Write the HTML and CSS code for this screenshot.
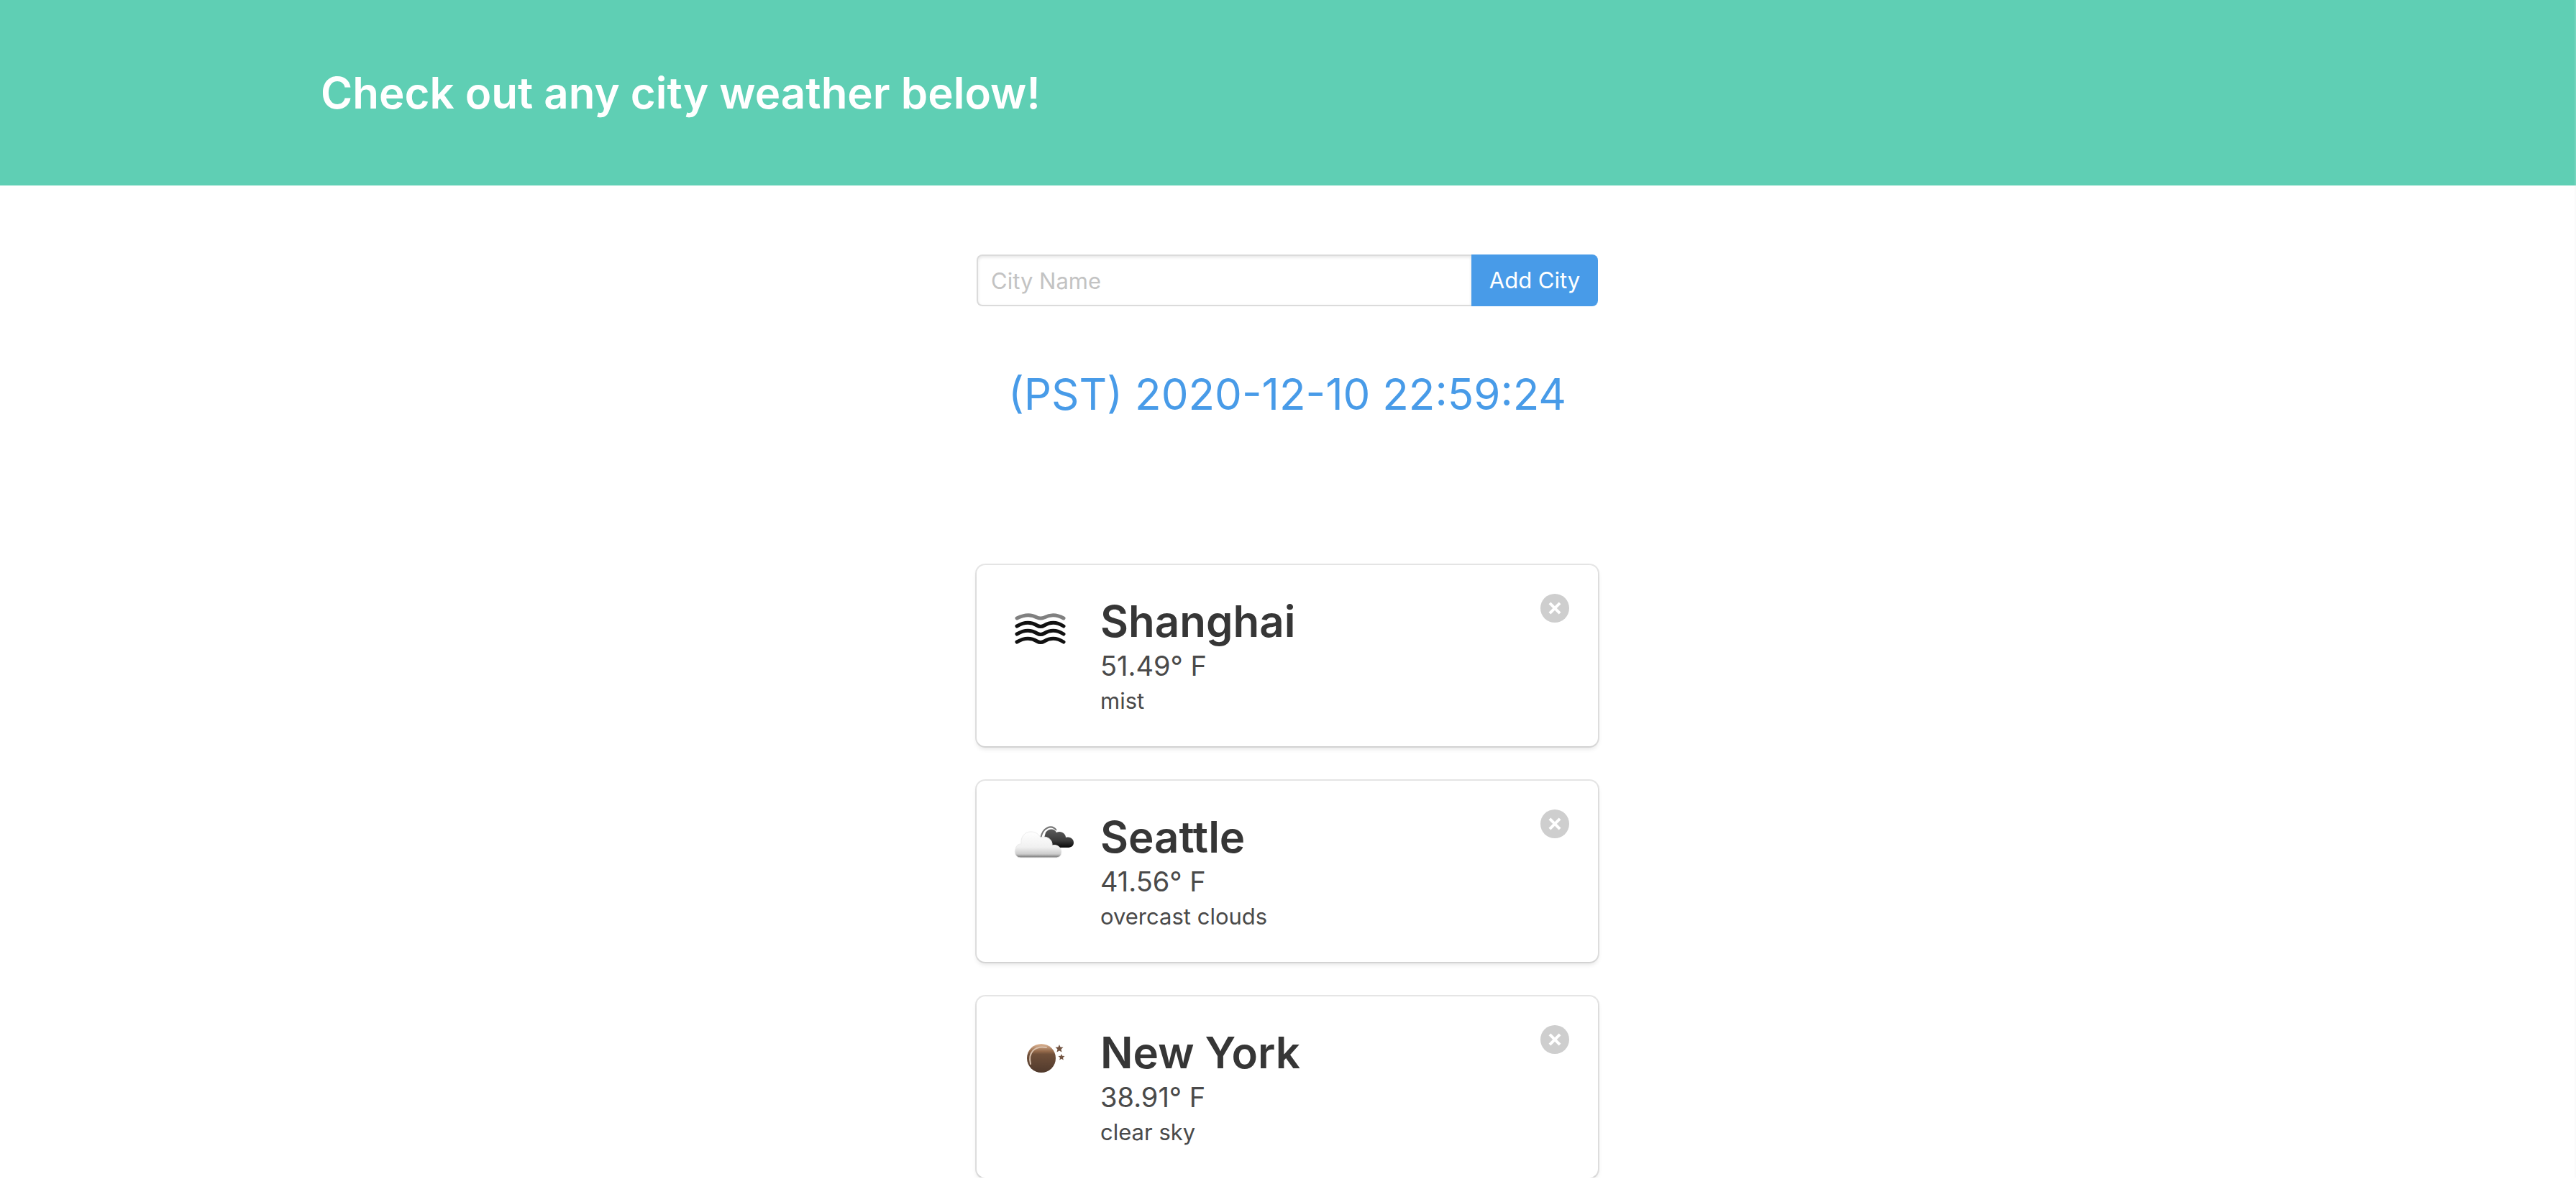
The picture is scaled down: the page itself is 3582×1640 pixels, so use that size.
FILE: index.html
```
<!DOCTYPE html>
<html lang="en">
<head>
<meta charset="utf-8">
<meta name="viewport" content="width=device-width, initial-scale=1">
<title>City Weather</title>
<link rel="stylesheet" href="styles.css">
</head>
<body>
<header class="hero">
  <div class="container">
    <h1 class="title">Check out any city weather below!</h1>
  </div>
</header>
<main class="section">
  <div class="column">
    <form class="city-form">
      <input class="input" type="text" placeholder="City Name" aria-label="City Name">
      <button class="button" type="submit">Add City</button>
    </form>
    <p class="clock">(PST) 2020-12-10 22:59:24</p>
    <div class="cards">
      <article class="box">
        <svg class="icon" viewBox="0 0 96 96" aria-hidden="true">
          <g class="mist">
            <path class="mist-top" d="M12 34Q28 26 40 33Q45 35 50 33Q63 26 77 34"/>
            <path d="M12 45Q27 36 40 44Q45 47 50 44Q63 36 77 45"/>
            <path d="M12 56Q27 47 40 55Q45 58 50 55Q63 47 77 56"/>
            <path d="M12 67Q27 58 40 66Q45 69 50 66Q63 58 77 67"/>
          </g>
        </svg>
        <div class="details">
          <h2 class="city">Shanghai</h2>
          <p class="temp">51.49° F</p>
          <p class="sky">mist</p>
        </div>
        <button class="delete" type="button" aria-label="Remove Shanghai"></button>
      </article>
      <article class="box">
        <svg class="icon" viewBox="0 0 96 96" aria-hidden="true">
          <defs>
            <linearGradient id="dark-cloud" x1="0" y1="0" x2="0" y2="1">
              <stop offset="0" stop-color="#5c5c5c"/><stop offset=".6" stop-color="#3c3c3c"/><stop offset="1" stop-color="#080808"/>
            </linearGradient>
            <linearGradient id="light-cloud" x1="0" y1="0" x2="0" y2="1">
              <stop offset="0" stop-color="#fff"/><stop offset=".6" stop-color="#f0f0f0"/><stop offset=".86" stop-color="#ccc"/><stop offset="1" stop-color="#707070"/>
            </linearGradient>
          </defs>
          <path d="M45 40C48 25 60 20 67 29" fill="none" stroke="#777" stroke-width="2"/>
          <path d="M52 32C57 25 65 27 67 32C74 29 80 34 80 39C87 37 91 42 91 46C91 51 87 53 83 53H61L49 43Z" fill="url(#dark-cloud)"/>
          <path d="M17 67C10 67 8 60 10 55C11 50 14 48 18 48C17 38 23 31 31 31C38 31 42 34 45 39C54 36 62 42 61 50C68 48 74 53 74 59C74 65 70 67 66 67Z" fill="url(#light-cloud)" stroke="#ececec" stroke-width="1"/>
        </svg>
        <div class="details">
          <h2 class="city">Seattle</h2>
          <p class="temp">41.56° F</p>
          <p class="sky">overcast clouds</p>
        </div>
        <button class="delete" type="button" aria-label="Remove Seattle"></button>
      </article>
      <article class="box">
        <svg class="icon" viewBox="0 0 96 96" aria-hidden="true">
          <defs>
            <linearGradient id="moon" x1="0" y1="0" x2="0" y2="1">
              <stop offset="0" stop-color="#e0b898"/><stop offset=".26" stop-color="#94694a"/><stop offset=".36" stop-color="#70503a"/><stop offset="1" stop-color="#50392c"/>
            </linearGradient>
          </defs>
          <circle cx="46" cy="46" r="20" fill="url(#moon)"/>
          <path d="M31 54C27 38 37 28 53 31" fill="none" stroke="#d8c0ac" stroke-width="2" stroke-linecap="round"/>
          <path d="M71 27l1.500 3.500 4 .3-3 2.700 1 4-3.500-2-3.500 2 1-4-3-2.700 4-.3zM74 40l1.200 2.800 3.300.2-2.500 2.200.8 3.300-2.800-1.700-2.800 1.700.8-3.300-2.500-2.200 3.300-.2z" fill="#725341"/>
        </svg>
        <div class="details">
          <h2 class="city">New York</h2>
          <p class="temp">38.91° F</p>
          <p class="sky">clear sky</p>
        </div>
        <button class="delete" type="button" aria-label="Remove New York"></button>
      </article>
    </div>
  </div>
</main>
</body>
</html>
```
FILE: styles.css
```
* {
  box-sizing: border-box;
  margin: 0;
}

body {
  background: #fff;
  color: #4a4a4a;
  font: 400 31px/50px Inter, "Liberation Sans", sans-serif;
}

.hero {
  padding: 96px 48px;
  border-right: 2px solid #74d5be;
  background: #5fcfb4;
}

.container {
  max-width: 2688px;
  margin: 0 auto;
}

.title {
  color: #fff;
  font-size: 60px;
  font-weight: 600;
  line-height: 66px;
}

.section {
  padding: 96px 24px 0;
  border-right: 2px solid #fafafa;
}

.column {
  max-width: 864px;
  margin: 0 auto;
}

.city-form {
  display: flex;
}

.input,
.button {
  height: 72px;
  font: inherit;
}

.input {
  flex: 1;
  min-width: 0;
  padding: 0 18px;
  border: 2px solid #dbdbdb;
  border-right: 0;
  border-radius: 8px 0 0 8px;
  background: #fff;
  box-shadow: inset 0 2px 4px rgba(10, 10, 10, 0.1);
  color: #363636;
}

.input::placeholder {
  color: #c3c3c3;
  opacity: 1;
}

.button {
  width: 176px;
  padding: 0;
  border: 0;
  border-radius: 0 8px 8px 0;
  background: #489be8;
  color: #fff;
  white-space: nowrap;
}

.clock {
  margin-top: 74px;
  color: #489be8;
  font-size: 60px;
  line-height: 96px;
  text-align: center;
}

.cards {
  display: grid;
  gap: 48px;
  margin-top: 190px;
}

.box {
  display: flex;
  align-items: flex-start;
  padding: 40px 40px 38px 44px;
  border-radius: 12px;
  background: #fff;
  box-shadow: 0 4px 6px rgba(10, 10, 10, 0.1), 0 0 0 2px rgba(10, 10, 10, 0.1);
}

.icon {
  flex: none;
  width: 96px;
  height: 96px;
  margin-right: 32px;
}

.mist {
  fill: none;
  stroke: #111;
  stroke-width: 5;
  stroke-linecap: round;
}

.mist-top {
  stroke: #808080;
}

.details {
  flex: 1;
}

.city {
  color: #363636;
  font-size: 60px;
  font-weight: 600;
  line-height: 76px;
}

.temp {
  font-size: 38px;
  line-height: 48px;
}

.delete {
  display: grid;
  place-items: center;
  width: 40px;
  height: 40px;
  padding: 0;
  border: 0;
  border-radius: 50%;
  background: #cecece;
}

.delete::before,
.delete::after {
  grid-area: 1 / 1;
  width: 20px;
  height: 4px;
  background: #fff;
  content: "";
  transform: rotate(45deg);
}

.delete::after {
  transform: rotate(-45deg);
}
```
